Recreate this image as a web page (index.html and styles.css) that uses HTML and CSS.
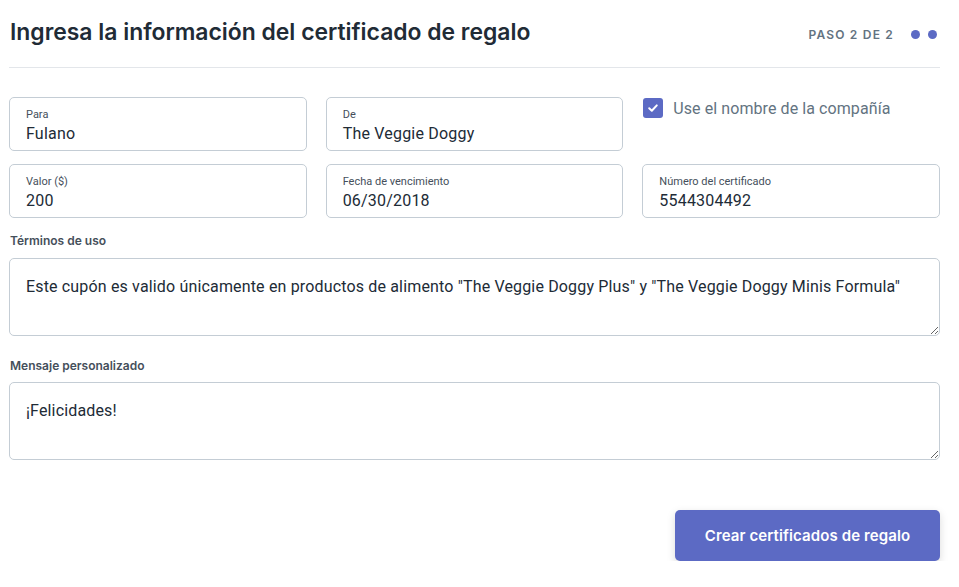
FILE: index.html
```html
<!DOCTYPE html>
<html lang="es">
<head>
<meta charset="utf-8">
<link rel="stylesheet" href="styles.css">
</head>
<body>
<div class="page">
  <header class="header">
    <h1 class="title">Ingresa la información del certificado de regalo</h1>
    <div class="step">
      <span class="step-text">PASO 2 DE 2</span>
      <span class="dot"></span>
      <span class="dot"></span>
    </div>
  </header>

  <div class="grid">
    <div class="field">
      <span class="field-label">Para</span>
      <span class="field-value">Fulano</span>
    </div>
    <div class="field">
      <span class="field-label">De</span>
      <span class="field-value">The Veggie Doggy</span>
    </div>
    <label class="check">
      <span class="box">
        <svg width="12" height="12" viewBox="0 0 12 12"><path d="M2.2 6.3 L4.8 8.8 L9.8 3.4" fill="none" stroke="#fff" stroke-width="2" stroke-linecap="round" stroke-linejoin="round"/></svg>
      </span>
      <span class="check-text">Use el nombre de la compañía</span>
    </label>
    <div class="field">
      <span class="field-label">Valor ($)</span>
      <span class="field-value">200</span>
    </div>
    <div class="field">
      <span class="field-label">Fecha de vencimiento</span>
      <span class="field-value">06/30/2018</span>
    </div>
    <div class="field">
      <span class="field-label">Número del certificado</span>
      <span class="field-value">5544304492</span>
    </div>
  </div>

  <div class="section-label">Términos de uso</div>
  <textarea class="area">Este cupón es valido únicamente en productos de alimento "The Veggie Doggy Plus" y "The Veggie Doggy Minis Formula"</textarea>

  <div class="section-label section-label-next">Mensaje personalizado</div>
  <textarea class="area">¡Felicidades!</textarea>

  <div class="actions">
    <button class="btn">Crear certificados de regalo</button>
  </div>
</div>
</body>
</html>
```
FILE: styles.css
```css
* { box-sizing: border-box; }
html, body { margin: 0; padding: 0; background: #fff; }
body { font-family: Roboto, "Noto Sans", sans-serif; color: #212b36; }
.page { padding: 0 19px 0 9px; }
.header {
  display: flex;
  align-items: center;
  justify-content: space-between;
  padding: 16px 0 19px 1px;
  border-bottom: 1px solid #e3e6ea;
}
.title {
  margin: 0;
  font-family: Inter, "Noto Sans", sans-serif;
  font-size: 22.9px;
  line-height: 32px;
  font-weight: 600;
  color: #212b36;
}
.step { display: flex; align-items: center; padding-top: 4px; margin-right: 3px; }
.step-text {
  font-family: Inter, "Noto Sans", sans-serif;
  font-size: 12px;
  font-weight: 600;
  letter-spacing: 1.2px;
  color: #637381;
  margin-right: 9px;
}
.dot { width: 9px; height: 9px; border-radius: 50%; background: #5c6ac4; margin-left: 8px; }
.dot:first-of-type { margin-left: 0; }
.grid {
  display: grid;
  grid-template-columns: 1fr 1fr 1fr;
  column-gap: 19px;
  row-gap: 13px;
  margin-top: 29px;
}
.field {
  display: flex;
  flex-direction: column;
  height: 54px;
  border: 1px solid #c4cdd5;
  border-radius: 5px;
  padding: 10px 16px 0;
}
.field-label { font-size: 11px; line-height: 14px; color: #454f5b; margin-bottom: 2px; }
.field-value { font-size: 16px; line-height: 20px; color: #212b36; letter-spacing: 0.2px; }
.check { display: flex; align-items: flex-start; gap: 10px; padding: 1px 0 0 1px; }
.box {
  width: 20px; height: 20px;
  border-radius: 3px;
  background: #5c6ac4;
  display: flex; align-items: center; justify-content: center;
  flex: none;
}
.check-text { font-size: 16px; line-height: 22px; color: #637381; letter-spacing: 0.08px; }
.section-label {
  font-family: Inter, "Noto Sans", sans-serif;
  font-size: 12px;
  font-weight: 600;
  line-height: 18px;
  color: #454f5b;
  margin: 14px 0 8px 1px;
}
.section-label-next { margin: 21px 0 7px 1px; }
.area {
  display: block;
  width: 100%;
  height: 78px;
  border: 1px solid #c4cdd5;
  border-radius: 5px;
  padding: 18px 16px;
  font-family: Roboto, "Noto Sans", sans-serif;
  font-size: 16px;
  line-height: 20px;
  letter-spacing: 0.16px;
  color: #212b36;
  resize: vertical;
  margin: 0;
}
.actions { display: flex; justify-content: flex-end; margin-top: 50px; }
.btn {
  width: 265px;
  height: 51px;
  border: none;
  border-radius: 5px;
  background: #5c6ac4;
  color: #fff;
  font-family: Inter, "Noto Sans", sans-serif;
  font-size: 15px;
  font-weight: 600;
  letter-spacing: 0.1px;
  box-shadow: 0 3px 8px rgba(0, 0, 0, 0.15);
}
```
